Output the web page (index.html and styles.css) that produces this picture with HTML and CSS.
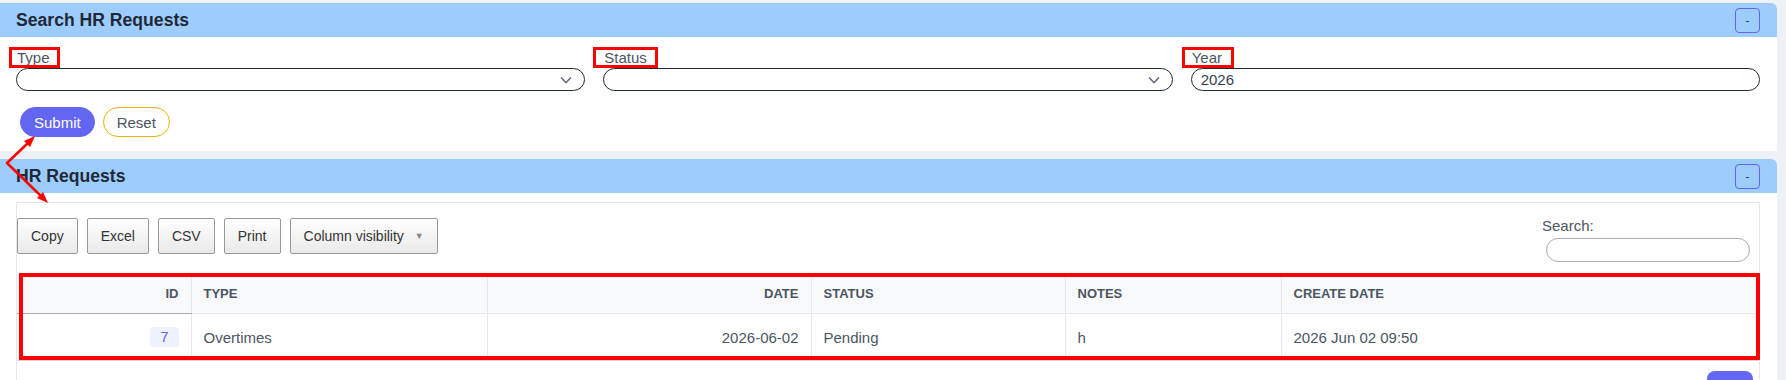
FILE: index.html
```html
<!DOCTYPE html>
<html>
<head>
    <title>HR Requests</title>
    <link rel="stylesheet" href="styles.css">
</head>
<body>

<div class="page">

    <div class="card">
        <div class="card-head">
            <h2>Search HR Requests</h2>
            <button class="toggle">-</button>
        </div>
        <div class="card-body search-body">
            <div class="filters">
                <div class="field">
                    <label>Type</label>
                    <div class="select">
                        <svg width="12" height="8" viewBox="0 0 12 8"><path d="M1 1.5l5 5 5-5" fill="none" stroke="#6b7280" stroke-width="1.6"/></svg>
                    </div>
                </div>
                <div class="field">
                    <label>Status</label>
                    <div class="select">
                        <svg width="12" height="8" viewBox="0 0 12 8"><path d="M1 1.5l5 5 5-5" fill="none" stroke="#6b7280" stroke-width="1.6"/></svg>
                    </div>
                </div>
                <div class="field">
                    <label>Year</label>
                    <div class="select input">2026</div>
                </div>
            </div>
            <div class="actions">
                <button class="btn btn-primary">Submit</button>
                <button class="btn btn-reset">Reset</button>
            </div>
        </div>
    </div>

    <div class="card">
        <div class="card-head">
            <h2>HR Requests</h2>
            <button class="toggle">-</button>
        </div>
        <div class="card-body list-body">
            <div class="dt">
                <div class="dt-top">
                    <div class="dt-buttons">
                        <button class="dt-button">Copy</button>
                        <button class="dt-button">Excel</button>
                        <button class="dt-button">CSV</button>
                        <button class="dt-button">Print</button>
                        <button class="dt-button">Column visibility <span class="caret">&#9660;</span></button>
                    </div>
                    <div class="dt-filter">
                        <label>Search:</label>
                        <div class="search-input"></div>
                    </div>
                </div>

                <table>
                    <colgroup>
                        <col style="width: 174px">
                        <col style="width: 296px">
                        <col style="width: 324px">
                        <col style="width: 254px">
                        <col style="width: 216px">
                        <col>
                    </colgroup>
                    <thead>
                        <tr>
                            <th class="num sorted">ID</th>
                            <th>Type</th>
                            <th class="num">Date</th>
                            <th>Status</th>
                            <th>Notes</th>
                            <th>Create Date</th>
                        </tr>
                    </thead>
                    <tbody>
                        <tr>
                            <td class="num"><span class="badge">7</span></td>
                            <td>Overtimes</td>
                            <td class="num">2026-06-02</td>
                            <td>Pending</td>
                            <td>h</td>
                            <td>2026 Jun 02 09:50</td>
                        </tr>
                    </tbody>
                </table>

                <div class="dt-bottom">
                    <button class="page-btn"></button>
                </div>
            </div>
        </div>
    </div>

</div>

<!-- red markup drawn over the screenshot -->
<svg class="marks" width="1786" height="380" viewBox="0 0 1786 380">
    <g fill="none" stroke="#ff0000" stroke-width="3">
        <rect x="10.5" y="48.5" width="48" height="18"/>
        <rect x="594.5" y="48.5" width="62" height="18"/>
        <rect x="1183.5" y="48.5" width="49" height="18"/>
    </g>
    <rect x="21" y="275" width="1737" height="83" fill="none" stroke="#ff0000" stroke-width="4"/>
    <g stroke="#ff0000" stroke-width="2.5" stroke-linecap="round">
        <line x1="7" y1="163" x2="28" y2="143"/>
        <line x1="7" y1="163" x2="41" y2="196"/>
    </g>
    <g fill="#ff0000">
        <polygon points="35,136 30,147 24,141"/>
        <polygon points="48,203 37,198 43,192"/>
    </g>
</svg>

</body>
</html>
```

FILE: styles.css
```css
body {
    margin: 0;
    background-color: #eef1f5;
    font-family: "Liberation Sans", Arial, sans-serif;
    color: #4b5563;
    overflow: hidden;
}

button {
    font-family: inherit;
    cursor: pointer;
}

.page {
    padding: 3px 9px 0 0;
}

.card {
    background: #fff;
    border-radius: 0 6px 0 0;
    margin-bottom: 8px;
}

.card-head {
    height: 34px;
    background-color: #9dcdfd;
    border-radius: 0 6px 0 0;
    display: flex;
    align-items: center;
    justify-content: space-between;
    padding: 0 17px 0 16px;
}

.card-head h2 {
    margin: 0;
    font-size: 17.6px;
    font-weight: bold;
    color: #1f2937;
}

.toggle {
    width: 25px;
    height: 25px;
    margin-top: 1px;
    padding: 0;
    border: 1px solid #6366f1;
    border-radius: 4px;
    background: transparent;
    color: #374151;
    font-size: 12px;
}

/* search form */

.search-body {
    padding: 10px 17px 14px 16px;
}

.filters {
    display: grid;
    grid-template-columns: repeat(3, 1fr);
    gap: 18px;
}

.field label {
    display: block;
    font-size: 15px;
    line-height: 21px;
    padding-left: 1px;
}

.select {
    height: 23px;
    box-sizing: border-box;
    border: 1.5px solid #1f2937;
    border-radius: 999px;
    display: flex;
    align-items: center;
    justify-content: flex-end;
    padding: 0 12px;
}

.select.input {
    justify-content: flex-start;
    font-size: 15px;
    color: #374151;
    padding: 0 9px;
}

.actions {
    display: flex;
    gap: 8px;
    margin: 16px 0 0 4px;
}

.btn {
    height: 30px;
    border-radius: 999px;
    font-size: 15px;
    padding: 0 13px;
}

.btn-primary {
    background-color: #6366f1;
    border: 1px solid #6366f1;
    color: #fff;
}

.btn-reset {
    background: #fff;
    border: 1px solid #eab308;
    color: #4b5563;
}

/* data table */

.list-body {
    padding: 9px 17px 0 16px;
}

.dt {
    border: 1px solid #e5e7eb;
    border-bottom: none;
    padding-top: 15px;
}

.dt-top {
    display: flex;
    justify-content: space-between;
    align-items: flex-start;
    padding-right: 9px;
    margin-bottom: 12px;
}

.dt-buttons {
    display: flex;
    gap: 9px;
}

.dt-button {
    height: 36px;
    padding: 0 13px;
    font-size: 14px;
    color: #333;
    border: 1px solid #999;
    border-radius: 2px;
    background: linear-gradient(to bottom, #fff 0%, #e9e9e9 100%);
}

.caret {
    font-size: 9px;
    color: #888;
    margin-left: 7px;
    position: relative;
    top: -2px;
}

.dt-filter {
    width: 208px;
    margin-top: -1px;
}

.dt-filter label {
    display: block;
    font-size: 15px;
    line-height: 18px;
    color: #4b5563;
}

.search-input {
    height: 24px;
    box-sizing: border-box;
    margin: 3px 0 0 4px;
    border: 1px solid #aaa;
    border-radius: 999px;
    background: #fff;
}

table {
    width: 100%;
    border-collapse: collapse;
    table-layout: fixed;
}

th, td {
    padding: 0 12px;
    text-align: left;
    border-left: 1px solid #e5e7eb;
}

th:first-child, td:first-child {
    border-left: none;
}

th {
    height: 39px;
    background-color: #f8f9fa;
    font-size: 13px;
    font-weight: bold;
    text-transform: uppercase;
    color: #4b5563;
    border-bottom: 1px solid #e5e7eb;
}

th.sorted {
    border-bottom-color: #aaa;
}

td {
    height: 46px;
    font-size: 15px;
    color: #4b5563;
    border-bottom: 1px solid #d1d5db;
}

.num {
    text-align: right;
}

.badge {
    display: inline-block;
    height: 20px;
    line-height: 20px;
    padding: 0 10px;
    border-radius: 4px;
    background-color: #eef2ff;
    color: #6366f1;
}

.dt-bottom {
    display: flex;
    justify-content: flex-end;
    padding: 10px 6px 0 0;
}

.page-btn {
    width: 46px;
    height: 30px;
    border: none;
    border-radius: 8px;
    background-color: #6366f1;
}

.marks {
    position: absolute;
    top: 0;
    left: 0;
    pointer-events: none;
}
```
